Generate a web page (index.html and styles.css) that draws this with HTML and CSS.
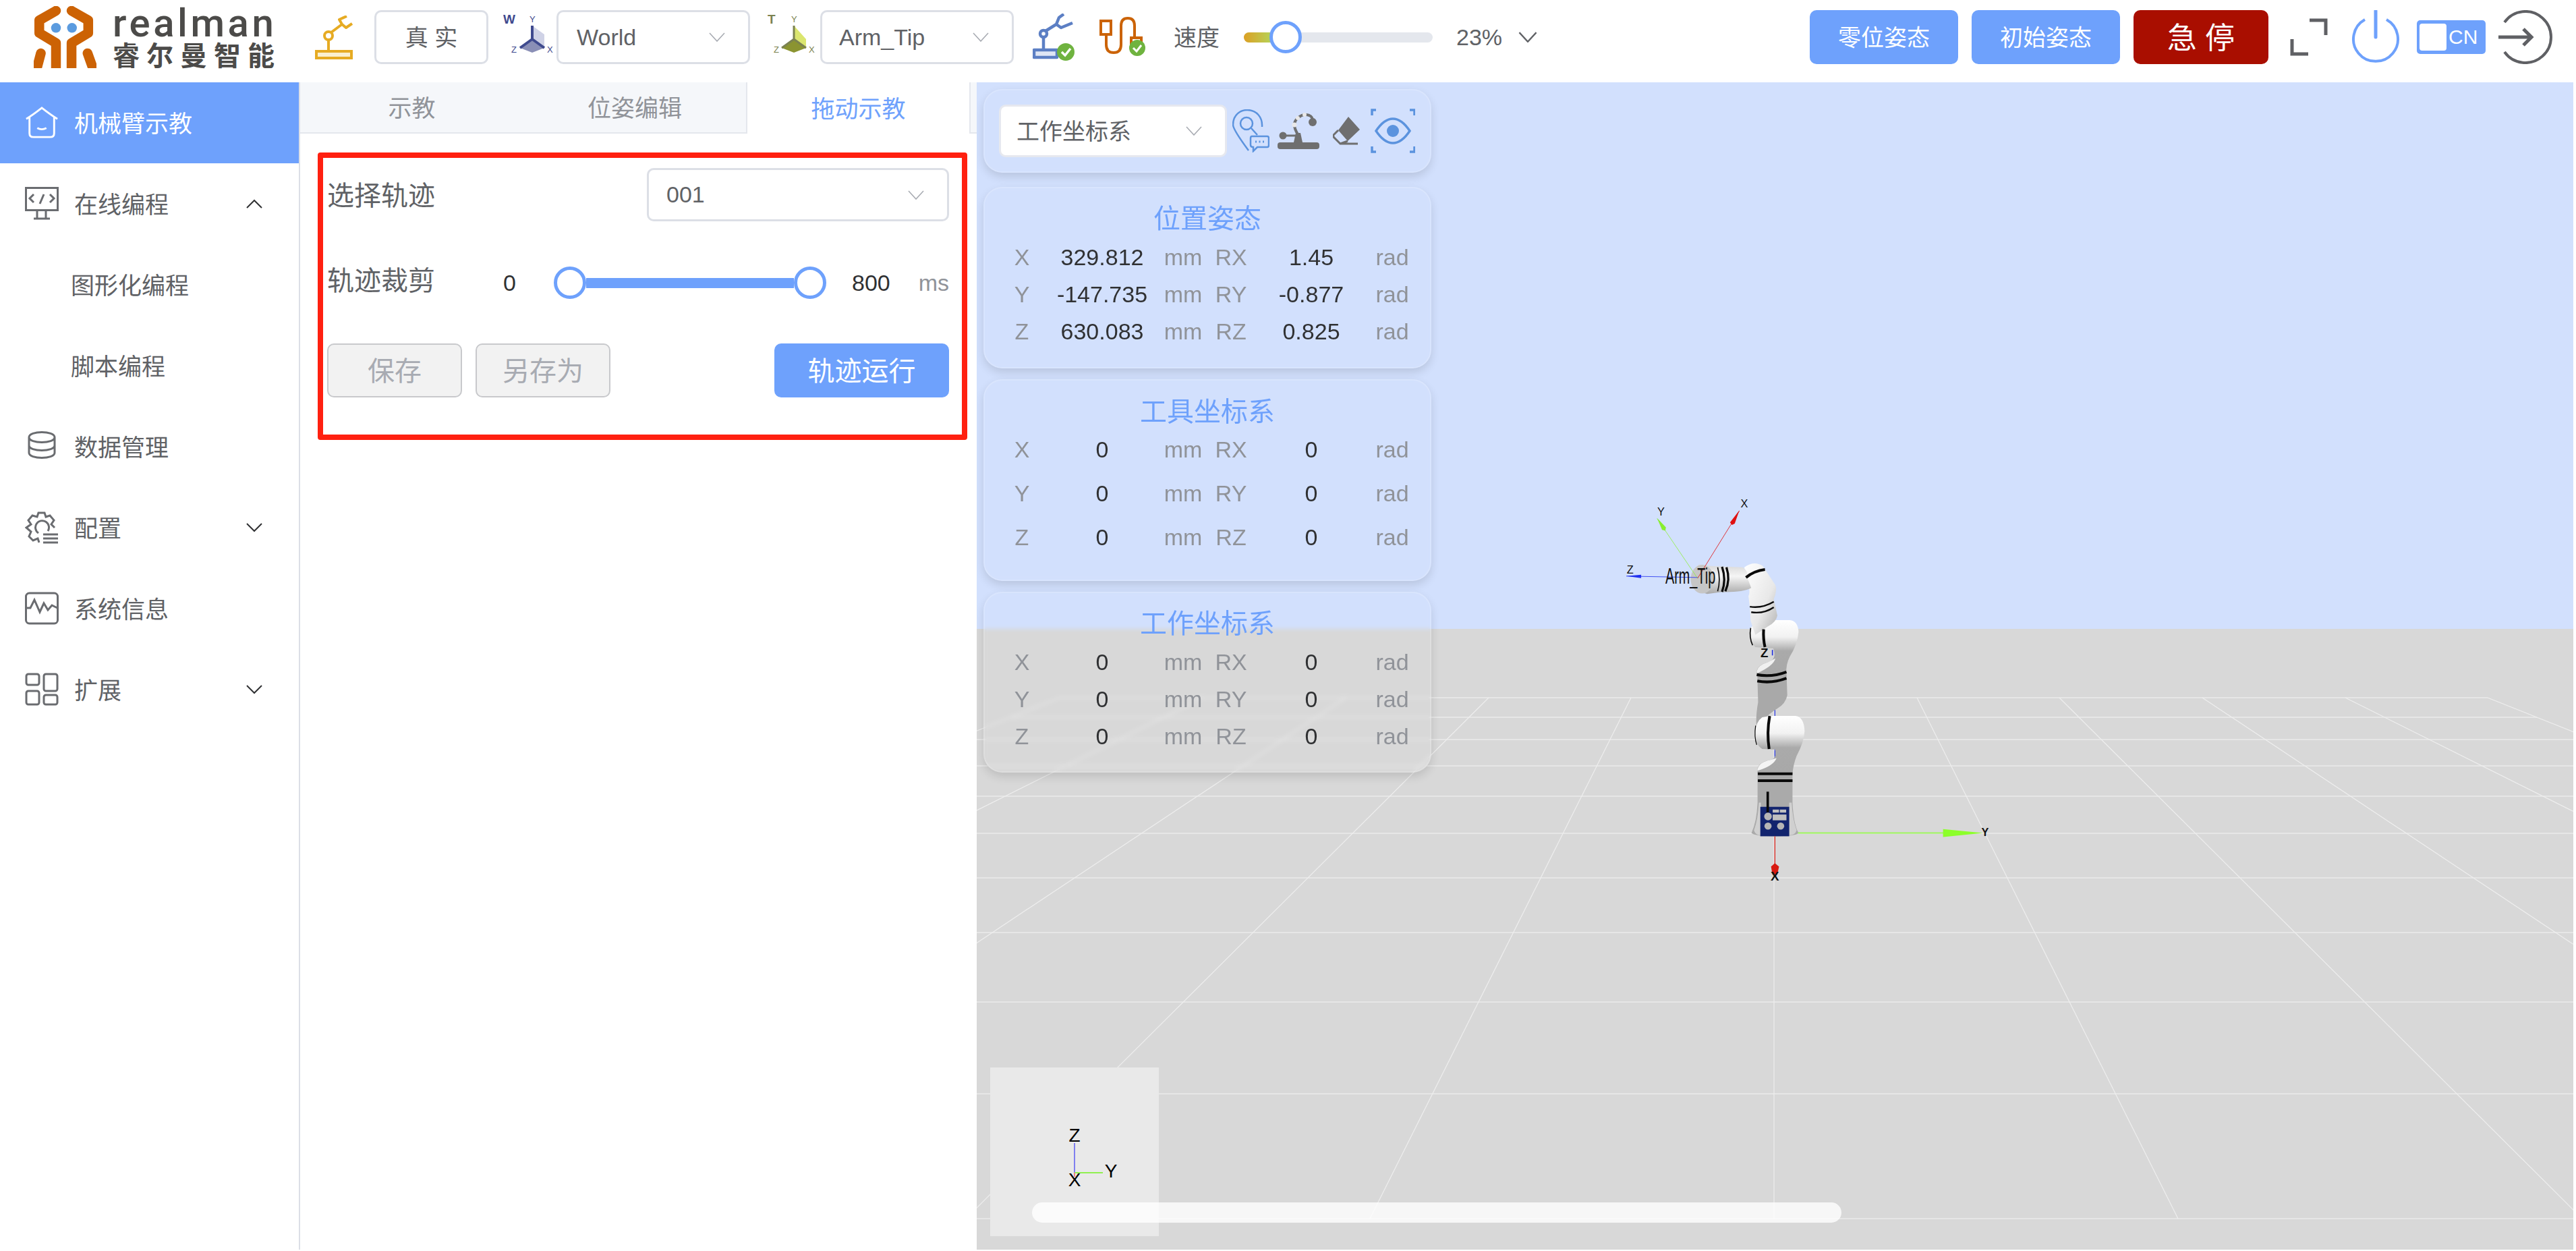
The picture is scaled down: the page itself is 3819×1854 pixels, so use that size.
FILE: index.html
```html
<!DOCTYPE html>
<html lang="zh-CN">
<head>
    <meta charset="UTF-8">
    <meta name="viewport" content="width=device-width, initial-scale=1.0">
    <title>realman 机械臂示教</title>
    <link rel="stylesheet" href="styles.css">
</head>
<body>
<div class="app">
    <header class="topbar">
        <div class="logo">
            <svg class="logo-mark" viewBox="150 25 282 277">
                <g fill="none" stroke="#cc6204" stroke-width="44" stroke-linecap="round" stroke-linejoin="round">
                    <path d="M250 45 L175 88 V145 L250 190 V300"/>
                    <path d="M320 45 L395 88 V145 L320 190 V300"/>
                    <path d="M182 236 L165 300"/>
                    <path d="M392 236 L415 300"/>
                </g>
                <circle cx="250" cy="122" r="22" fill="#5b9bdf"/>
                <circle cx="322" cy="122" r="22" fill="#5b9bdf"/>
            </svg>
            <div class="logo-text">
                <div class="logo-en">realman</div>
                <div class="logo-cn">睿尔曼智能</div>
            </div>
        </div>

        <svg class="icon-arm" viewBox="0 0 56 65">
            <g fill="none" stroke="#e6ab23" stroke-width="4">
                <rect x="2" y="53" width="52" height="10" fill="#faf0cf"/>
                <path d="M20 51 V37"/>
                <circle cx="20" cy="30" r="6"/>
                <path d="M24 25 L40 13 L36 6 L47 1 M40 13 L46 18 L55 12" stroke-linejoin="round"/>
            </g>
        </svg>
        <button class="mode-btn">真 实</button>

        <svg class="icon-frame" viewBox="0 -4 74 70">
            <path d="M43 18 L61 31 V51 L43 38 Z" fill="#cfd2e6"/>
            <path d="M43 38 L25 51 L43 58 L61 51 Z" fill="#8a8fb6"/>
            <path d="M43 38 V18 M43 38 L25 51 M43 38 L61 51" stroke="#3f4a8e" stroke-width="4" fill="none"/>
            <text x="0" y="15" class="frame-big" fill="#3f4a8e">W</text>
            <text x="39" y="13" class="frame-small" fill="#3f4a8e">Y</text>
            <text x="12" y="58" class="frame-small" fill="#3f4a8e">Z</text>
            <text x="65" y="58" class="frame-small" fill="#3f4a8e">X</text>
        </svg>
        <div class="select select-frame">
            <span>World</span>
            <svg class="chev" viewBox="0 0 24 14"><path d="M1 1 L12 13 L23 1"/></svg>
        </div>

        <svg class="icon-frame icon-frame-tool" viewBox="0 -4 72 70">
            <path d="M40 18 L58 38 V51 L40 38 Z" fill="#dbe66f"/>
            <path d="M40 38 L22 51 L40 58 L58 51 Z" fill="#8b9431"/>
            <path d="M40 38 V18 M40 38 L22 51 M40 38 L58 51" stroke="#7b8251" stroke-width="3" fill="none"/>
            <text x="1" y="15" class="frame-big" fill="#7b8251">T</text>
            <text x="36" y="13" class="frame-small" fill="#7b8251">Y</text>
            <text x="10" y="58" class="frame-small" fill="#7b8251">Z</text>
            <text x="62" y="58" class="frame-small" fill="#7b8251">X</text>
        </svg>
        <div class="select select-tool">
            <span>Arm_Tip</span>
            <svg class="chev" viewBox="0 0 24 14"><path d="M1 1 L12 13 L23 1"/></svg>
        </div>

        <svg class="icon-robot" viewBox="0 0 62 70">
            <g fill="none" stroke="#5c7fc4" stroke-width="4.5" stroke-linejoin="round">
                <rect x="2" y="54" width="34" height="11" fill="#dfe6f5"/>
                <path d="M16 52 V36"/>
                <circle cx="16" cy="30" r="5"/>
                <path d="M19 26 L35 16 L39 6 L46 1 M35 16 L42 21 L59 14"/>
            </g>
            <circle cx="49" cy="57" r="13" fill="#6fb33f"/>
            <path d="M43 57 L48 62 L56 52" fill="none" stroke="#fff" stroke-width="3.5"/>
        </svg>
        <svg class="icon-cable" viewBox="0 0 68 60">
            <g fill="none" stroke="#cb6306" stroke-width="4">
                <rect x="2" y="6" width="15" height="20"/>
                <path d="M10 26 V41 Q10 53 21 53 Q32 53 32 41 V13 Q32 2 42 2 Q52 2 52 13 V30"/>
                <rect x="47" y="31" width="15" height="8"/>
            </g>
            <circle cx="56" cy="46" r="12" fill="#6fb33f"/>
            <path d="M50 46 L55 51 L62 42" fill="none" stroke="#fff" stroke-width="3"/>
        </svg>

        <span class="speed-label">速度</span>
        <div class="speed-slider">
            <div class="speed-track"><div class="speed-fill"></div></div>
            <div class="speed-thumb"></div>
        </div>
        <span class="speed-value">23%</span>
        <svg class="chev chev-dark" viewBox="0 0 24 14"><path d="M1 1 L12 13 L23 1"/></svg>

        <div class="top-actions">
            <button class="action-btn">零位姿态</button>
            <button class="action-btn">初始姿态</button>
            <button class="stop-btn">急 停</button>
            <svg class="icon-full" viewBox="0 0 56 56">
                <path d="M29 3 H53 V25 M3 31 V53 H27" fill="none" stroke="#5f6064" stroke-width="5"/>
            </svg>
            <svg class="icon-power" viewBox="0 0 72 80">
                <path d="M20 14 A33 33 0 1 0 52 14" fill="none" stroke="#6ea1fc" stroke-width="4"/>
                <path d="M36 1 V40" fill="none" stroke="#6ea1fc" stroke-width="5" stroke-linecap="round"/>
            </svg>
            <div class="lang-toggle"><span class="lang-knob"></span><span>CN</span></div>
            <svg class="icon-exit" viewBox="0 0 82 80">
                <path d="M9 18 A38 38 0 1 1 9 62" fill="none" stroke="#5f6064" stroke-width="4"/>
                <path d="M0 40 H48 M37 28 L49 40 L37 52" fill="none" stroke="#5f6064" stroke-width="5"/>
            </svg>
        </div>
    </header>

    <div class="workspace">
        <nav class="sidebar">
            <a class="menu-item active">
                <svg class="menu-icon" viewBox="0 0 52 52">
                    <path d="M2 20 Q12 14 26 3 Q40 14 50 20 M7 18 V42 Q7 48 13 48 H39 Q45 48 45 42 V18 M19 34 Q26 38 33 34"/>
                </svg>
                <span>机械臂示教</span>
            </a>
            <a class="menu-item">
                <svg class="menu-icon" viewBox="0 0 50 50">
                    <rect x="1.5" y="1.5" width="47" height="33"/>
                    <path d="M13 11 L7 17 L13 23 M22 25 L28 11 M37 11 L43 17 L37 23 M18 35 V46 M31 35 V46 M13 47 H37"/>
                </svg>
                <span>在线编程</span>
                <svg class="menu-chev" viewBox="0 0 24 14"><path d="M1 13 L12 2 L23 13"/></svg>
            </a>
            <a class="menu-item sub"><span>图形化编程</span></a>
            <a class="menu-item sub"><span>脚本编程</span></a>
            <a class="menu-item">
                <svg class="menu-icon" viewBox="-4 0 50 50">
                    <path d="M2 11 C2 1 40 1 40 11 V34 C40 44 2 44 2 34 Z M2 11 C2 21 40 21 40 11 M2 23 C2 33 40 33 40 23"/>
                </svg>
                <span>数据管理</span>
            </a>
            <a class="menu-item">
                <svg class="menu-icon" viewBox="0 0 50 50">
                    <path d="M44 25 L39 20 L43 14 L37 7 L31 9 L29 3 H20 L18 9 L11 7 L5 14 L9 20 L2 25 L9 31 L6 38 L12 44 L19 41 L21 47 M34 30 A10 10 0 1 0 20 33 M27 35 H49 M27 41 H49 M27 47 H49"/>
                </svg>
                <span>配置</span>
                <svg class="menu-chev" viewBox="0 0 24 14"><path d="M1 1 L12 12 L23 1"/></svg>
            </a>
            <a class="menu-item">
                <svg class="menu-icon" viewBox="0 0 50 50">
                    <rect x="1.5" y="2" width="47" height="45" rx="5"/>
                    <path d="M2 24 H8 L14 12 L22 30 L28 17 L34 27 L40 20 L48 24"/>
                </svg>
                <span>系统信息</span>
            </a>
            <a class="menu-item">
                <svg class="menu-icon" viewBox="0 0 50 50">
                    <rect x="2" y="2" width="19" height="16" rx="3"/>
                    <rect x="2" y="27" width="19" height="20" rx="3"/>
                    <rect x="28" y="2" width="20" height="25" rx="3"/>
                    <rect x="28" y="33" width="20" height="14" rx="3"/>
                </svg>
                <span>扩展</span>
                <svg class="menu-chev" viewBox="0 0 24 14"><path d="M1 1 L12 12 L23 1"/></svg>
            </a>
        </nav>

        <section class="teach-panel">
            <div class="tabs">
                <div class="tab">示教</div>
                <div class="tab tab-edge">位姿编辑</div>
                <div class="tab tab-active">拖动示教</div>
                <div class="tab-rest"></div>
            </div>

            <div class="drag-box">
                <div class="drag-row">
                    <span class="drag-label">选择轨迹</span>
                    <div class="select select-track">
                        <span>001</span>
                        <svg class="chev" viewBox="0 0 24 14"><path d="M1 1 L12 13 L23 1"/></svg>
                    </div>
                </div>
                <div class="drag-row drag-row-slider">
                    <span class="drag-label drag-label-up">轨迹裁剪</span>
                    <span class="clip-min">0</span>
                    <div class="clip-slider">
                        <span class="clip-thumb"></span>
                        <span class="clip-fill"></span>
                        <span class="clip-thumb"></span>
                    </div>
                    <span class="clip-max">800</span>
                    <span class="clip-unit">ms</span>
                </div>
                <div class="drag-row drag-row-btns">
                    <button class="ghost-btn">保存</button>
                    <button class="ghost-btn">另存为</button>
                    <button class="run-btn">轨迹运行</button>
                </div>
            </div>
        </section>

        <section class="scene">
            <svg class="scene-canvas" viewBox="1448 122 2367 1730">
                <rect x="1448" y="122" width="2367" height="810" fill="#d2e0fd"/>
                <rect x="1448" y="932" width="2367" height="920" fill="#d8d8d8"/>

                <g stroke="#e6e6e6" stroke-width="2">
                    <line x1="1571" y1="1034" x2="3688" y2="1034"/>
                    <line x1="1499" y1="1063" x2="3761" y2="1063"/>
                    <line x1="1416" y1="1096" x2="3844" y2="1096"/>
                    <line x1="1318" y1="1135" x2="3942" y2="1135"/>
                    <line x1="1205" y1="1180" x2="4055" y2="1180"/>
                    <line x1="1067" y1="1235" x2="4193" y2="1235"/>
                    <line x1="902" y1="1301" x2="4358" y2="1301"/>
                    <line x1="699" y1="1382" x2="4561" y2="1382"/>
                    <line x1="440" y1="1485" x2="4820" y2="1485"/>
                    <line x1="99" y1="1621" x2="5161" y2="1621"/>
                    <line x1="-365" y1="1806" x2="5625" y2="1806"/>
                </g>
                <g stroke="#eeeeee" stroke-width="1.2">
                    <line x1="2630" y1="1034" x2="2630" y2="1806"/>
                    <line x1="2418" y1="1034" x2="2031" y2="1806"/>
                    <line x1="2842" y1="1034" x2="3229" y2="1806"/>
                    <line x1="2207" y1="1034" x2="1432" y2="1806"/>
                    <line x1="3053" y1="1034" x2="3828" y2="1806"/>
                    <line x1="1995" y1="1034" x2="833" y2="1806"/>
                    <line x1="3265" y1="1034" x2="4427" y2="1806"/>
                    <line x1="1783" y1="1034" x2="234" y2="1806"/>
                    <line x1="3477" y1="1034" x2="5026" y2="1806"/>
                    <line x1="1571" y1="1034" x2="-365" y2="1806"/>
                    <line x1="3688" y1="1034" x2="5625" y2="1806"/>
                </g>

                <g transform="translate(2380 700) scale(0.408)">
                    <defs>
                        <linearGradient id="bodyTop" x1="0" y1="0" x2="0" y2="1">
                            <stop offset="0" stop-color="#ffffff"/>
                            <stop offset="0.3" stop-color="#f2f2f2"/>
                            <stop offset="0.55" stop-color="#aaaaaa"/>
                            <stop offset="1" stop-color="#a8a8a8"/>
                        </linearGradient>
                        <linearGradient id="bodyWrist" x1="0" y1="0" x2="0" y2="1">
                            <stop offset="0" stop-color="#d8d8d8"/>
                            <stop offset="0.4" stop-color="#f5f5f5"/>
                            <stop offset="1" stop-color="#a8a8a8"/>
                        </linearGradient>
                        <linearGradient id="bodyFore" x1="0" y1="0" x2="1" y2="1">
                            <stop offset="0" stop-color="#ffffff"/>
                            <stop offset="0.6" stop-color="#e8e8e8"/>
                            <stop offset="1" stop-color="#b0b0b0"/>
                        </linearGradient>
                    </defs>

                    <line x1="616" y1="860" x2="616" y2="1040" stroke="#2030e0" stroke-width="3"/>
                    <line x1="607" y1="645" x2="607" y2="665" stroke="#2030e0" stroke-width="4"/>

                    <!-- base -->
                    <path d="M553 1090 H680 V1200 Q684 1280 702 1310 Q690 1322 616 1322 Q545 1322 531 1310 Q550 1270 553 1200 Z" fill="#aaaaaa"/>
                    <path d="M540 1300 Q555 1260 558 1200 L565 1200 V1318 Q545 1318 540 1300 Z M695 1300 Q680 1260 677 1200 L668 1200 V1318 Q690 1318 695 1300 Z" fill="#d0d0d0"/>
                    <!-- lower arm -->
                    <path d="M552 730 L658 722 L661 810 Q655 840 625 858 Q590 880 575 900 L552 950 Q543 900 555 835 Z" fill="#a9a9a9"/>
                    <!-- shoulder -->
                    <path d="M600 885 H690 Q722 888 724 940 Q722 980 695 1030 Q683 1060 680 1095 L553 1095 V1075 Q560 1052 600 1045 Q625 1038 616 1007 L570 1005 Q545 990 544 945 Q548 905 570 890 Z" fill="url(#bodyTop)"/>
                    <path d="M553 1078 Q560 1052 600 1045 L622 1038 Q612 1066 553 1084 Z" fill="#f4f4f4"/>
                    <!-- elbow -->
                    <path d="M620 537 H670 Q700 540 702 580 Q698 625 670 670 Q655 700 658 730 L552 740 L550 720 Q555 700 590 690 Q625 680 610 640 L545 635 Q525 620 525 570 Q530 550 620 537 Z" fill="url(#bodyTop)"/>
                    <path d="M550 722 Q555 700 590 690 L618 676 Q612 702 552 730 Z" fill="#f0f0f0"/>
                    <!-- forearm -->
                    <path d="M505 345 Q540 320 572 340 L618 410 Q625 430 612 460 L625 520 Q620 545 590 560 L545 590 L528 540 L525 490 L520 450 Q530 430 510 380 Z" fill="url(#bodyFore)"/>
                    <!-- wrist -->
                    <path d="M380 340 L500 345 Q520 360 515 380 L530 420 Q500 437 420 435 L370 442 Q320 430 312 390 Q315 350 340 335 Z" fill="url(#bodyWrist)"/>
                    <ellipse cx="352" cy="388" rx="42" ry="52" fill="#c6c6c6"/>

                    <!-- black bands -->
                    <g fill="none" stroke="#0a0a0a" stroke-width="10">
                        <path d="M511 382 Q540 358 580 353"/>
                        <path d="M525 488 Q570 495 612 470" stroke-width="6"/>
                        <path d="M530 508 Q575 515 612 490" stroke-width="6"/>
                        <path d="M575 570 Q573 605 580 635"/>
                        <path d="M528 565 Q522 600 535 628" stroke-width="4"/>
                        <path d="M550 735 Q605 745 658 725"/>
                        <path d="M552 758 Q605 768 658 748"/>
                        <path d="M597 885 Q586 945 595 1005"/>
                        <path d="M546 920 Q540 960 550 990" stroke-width="3"/>
                        <path d="M554 1095 H680"/>
                        <path d="M554 1120 H680"/>
                        <path d="M408 345 Q420 390 408 432" stroke-width="4"/>
                        <path d="M424 343 Q440 390 424 434" stroke-width="8"/>
                        <path d="M440 345 Q455 390 436 432" stroke-width="8"/>
                    </g>

                    <!-- control plate -->
                    <rect x="563" y="1215" width="105" height="107" fill="#12246e"/>
                    <circle cx="591" cy="1250" r="14" fill="#b5b5b5"/>
                    <circle cx="591" cy="1285" r="13" fill="#b5b5b5"/>
                    <circle cx="637" cy="1285" r="13" fill="#b5b5b5"/>
                    <rect x="608" y="1225" width="23" height="11" fill="#c0c0c0"/>
                    <rect x="634" y="1225" width="23" height="11" fill="#c0c0c0"/>
                    <rect x="608" y="1243" width="50" height="21" fill="#c0c0c0"/>
                    <path d="M590 1160 V1235" stroke="#0a0a0a" stroke-width="9"/>

                    <!-- base axes -->
                    <line x1="700" y1="1310" x2="1232" y2="1310" stroke="#9cf55a" stroke-width="5"/>
                    <path d="M1227 1296 L1372 1310 L1227 1325 Z" fill="#8cff2a"/>
                    <line x1="616" y1="1322" x2="616" y2="1425" stroke="#d81a10" stroke-width="3"/>
                    <path d="M602 1432 L616 1420 L631 1432 L625 1460 H607 Z" fill="#d81a10"/>
                    <text x="1380" y="1322" class="axis-label axis-label-bold">Y</text>
                    <text x="616" y="1484" class="axis-label axis-label-big">X</text>
                    <text x="578" y="672" class="axis-label axis-label-big">Z</text>

                    <!-- tool axes -->
                    <line x1="335" y1="385" x2="487" y2="140" stroke="#e01010" stroke-width="2"/>
                    <path d="M487 138 L470 186 L460 191 L453 182 Z" fill="#e01010"/>
                    <line x1="335" y1="385" x2="188" y2="168" stroke="#90f040" stroke-width="2"/>
                    <path d="M188 166 L220 200 L218 212 L206 209 Z" fill="#88ee30"/>
                    <line x1="335" y1="382" x2="76" y2="377" stroke="#2030f0" stroke-width="2"/>
                    <path d="M76 377 L130 372 V384 Z" fill="#2030f0"/>
                    <text x="505" y="128" class="axis-label">X</text>
                    <text x="202" y="158" class="axis-label">Y</text>
                    <text x="90" y="368" class="axis-label">Z</text>
                    <text x="218" y="405" class="arm-tip" textLength="182" lengthAdjust="spacingAndGlyphs">Arm_Tip</text>
                </g>
            </svg>

            <div class="float-cards">
                <div class="card card-tools">
                    <div class="select select-coord">
                        <span>工作坐标系</span>
                        <svg class="chev" viewBox="0 0 24 14"><path d="M1 1 L12 13 L23 1"/></svg>
                    </div>
                    <svg class="tool-icon tool-pin" viewBox="0 0 55 64">
                        <g fill="none" stroke="#5b93de" stroke-width="2.5">
                            <path d="M24 61 Q1 30 1 23 C1 8 12 1 22 1 C36 1 45 12 44 26"/>
                            <circle cx="21" cy="21" r="9"/>
                            <path d="M28 28 L37 38"/>
                            <path d="M29 40 H52 Q54 40 54 43 V53 Q54 56 52 56 H37 L31 62 V56 Q27 56 27 53 V43 Q27 40 29 40 Z"/>
                        </g>
                        <path d="M34 48 H36 M39.5 48 H41.5 M45 48 H47" stroke="#5b93de" stroke-width="3"/>
                    </svg>
                    <svg class="tool-icon tool-robot" viewBox="0 0 62 54">
                        <rect x="0" y="44" width="62" height="10" rx="4" fill="#6f6f6f"/>
                        <path d="M24 44 L27 30 H34 L37 44 Z" fill="#6f6f6f"/>
                        <path d="M30 32 Q20 16 30 8 Q38 1 47 4 Q52 6 52 12" fill="none" stroke="#6f6f6f" stroke-width="4"/>
                        <path d="M8 34 H28" stroke="#6f6f6f" stroke-width="3"/>
                        <circle cx="8" cy="34" r="5.5" fill="#6f6f6f"/>
                        <circle cx="52" cy="14" r="6" fill="#6f6f6f"/>
                        <circle cx="25" cy="18" r="3.5" fill="#e8e8e8"/>
                        <circle cx="30" cy="8" r="3" fill="#e8e8e8"/>
                        <circle cx="40" cy="3" r="3" fill="#e8e8e8"/>
                    </svg>
                    <svg class="tool-icon tool-eraser" viewBox="0 0 40 42">
                        <path d="M23 0 L40 19 L22 36 L8 20 Z" fill="#6f6f6f"/>
                        <path d="M8 20 L1 27 Q0 29 2 31 L11 40 H37 M11 40 L22 36" fill="none" stroke="#6f6f6f" stroke-width="3"/>
                    </svg>
                    <svg class="tool-icon tool-eye" viewBox="0 0 66 66">
                        <g fill="none" stroke="#5b93de" stroke-width="3.5">
                            <path d="M8 2 H2 V10 M58 2 H65 V10 M2 56 V64 H8 M65 56 V64 H58"/>
                            <path d="M8 33 Q20 15 33 15 Q46 15 58 33 Q46 51 33 51 Q20 51 8 33 Z"/>
                        </g>
                        <circle cx="33" cy="33" r="9" fill="#5b93de"/>
                    </svg>
                </div>

                <div class="card card-pose">
                    <div class="card-title">位置姿态</div>
                    <div class="pose-row"><span class="pose-key">X</span><span class="pose-val">329.812</span><span class="pose-key">mm</span><span class="pose-key">RX</span><span class="pose-val">1.45</span><span class="pose-key">rad</span></div>
                    <div class="pose-row"><span class="pose-key">Y</span><span class="pose-val">-147.735</span><span class="pose-key">mm</span><span class="pose-key">RY</span><span class="pose-val">-0.877</span><span class="pose-key">rad</span></div>
                    <div class="pose-row"><span class="pose-key">Z</span><span class="pose-val">630.083</span><span class="pose-key">mm</span><span class="pose-key">RZ</span><span class="pose-val">0.825</span><span class="pose-key">rad</span></div>
                </div>

                <div class="card card-tool">
                    <div class="card-title">工具坐标系</div>
                    <div class="pose-row"><span class="pose-key">X</span><span class="pose-val">0</span><span class="pose-key">mm</span><span class="pose-key">RX</span><span class="pose-val">0</span><span class="pose-key">rad</span></div>
                    <div class="pose-row"><span class="pose-key">Y</span><span class="pose-val">0</span><span class="pose-key">mm</span><span class="pose-key">RY</span><span class="pose-val">0</span><span class="pose-key">rad</span></div>
                    <div class="pose-row"><span class="pose-key">Z</span><span class="pose-val">0</span><span class="pose-key">mm</span><span class="pose-key">RZ</span><span class="pose-val">0</span><span class="pose-key">rad</span></div>
                </div>

                <div class="card card-work">
                    <div class="card-title">工作坐标系</div>
                    <div class="pose-row"><span class="pose-key">X</span><span class="pose-val">0</span><span class="pose-key">mm</span><span class="pose-key">RX</span><span class="pose-val">0</span><span class="pose-key">rad</span></div>
                    <div class="pose-row"><span class="pose-key">Y</span><span class="pose-val">0</span><span class="pose-key">mm</span><span class="pose-key">RY</span><span class="pose-val">0</span><span class="pose-key">rad</span></div>
                    <div class="pose-row"><span class="pose-key">Z</span><span class="pose-val">0</span><span class="pose-key">mm</span><span class="pose-key">RZ</span><span class="pose-val">0</span><span class="pose-key">rad</span></div>
                </div>
            </div>

            <div class="gizmo">
                <svg class="gizmo-axes" viewBox="0 0 250 250">
                    <line x1="125" y1="112" x2="125" y2="156" stroke="#8080f0" stroke-width="2"/>
                    <line x1="125" y1="156" x2="167" y2="156" stroke="#90f050" stroke-width="2"/>
                    <line x1="125" y1="156" x2="125" y2="162" stroke="#f08080" stroke-width="2"/>
                    <text x="125" y="110" class="gizmo-label">Z</text>
                    <text x="179" y="163" class="gizmo-label">Y</text>
                    <text x="125" y="176" class="gizmo-label">X</text>
                </svg>
            </div>
            <div class="scene-scroll"></div>
        </section>
    </div>
</div>
</body>
</html>
```

FILE: styles.css
```css
:root {
    --primary-color: #6ea1fc;
    --text-color: #606266;
    --muted-color: #909399;
    --dark-text: #303133;
    --line-color: #dcdfe6;
    --sans: "Liberation Sans", "Noto Sans CJK SC", sans-serif;
}

* {
    box-sizing: border-box;
}

html {
    overflow: hidden;
}

body {
    margin: 0;
    background-color: #ffffff;
    font-family: var(--sans);
    font-size: 34px;
    color: var(--text-color);
}

button {
    font-family: var(--sans);
    cursor: pointer;
    padding: 0 0 4px;
}

.app {
    width: 3815px;
    height: 1852px;
    display: flex;
    flex-direction: column;
    overflow: hidden;
}

/* top bar */
.topbar {
    flex: 0 0 122px;
    display: flex;
    align-items: center;
    padding: 0 0 12px 50px;
}

.logo {
    display: flex;
    align-items: center;
    gap: 24px;
    width: 360px;
    height: 92px;
}

.logo-mark {
    width: 93px;
    height: 92px;
    flex: none;
}

.logo-text {
    color: #4c4b49;
    white-space: nowrap;
}

.logo-en {
    font-family: Roboto, sans-serif;
    font-size: 58px;
    font-weight: 500;
    letter-spacing: 4.6px;
    line-height: 50px;
}

.logo-cn {
    font-family: "Noto Sans CJK SC", sans-serif;
    font-size: 40px;
    font-weight: 700;
    letter-spacing: 10px;
    line-height: 42px;
}

.icon-arm {
    width: 56px;
    height: 65px;
    margin-left: 57px;
}

.mode-btn {
    width: 169px;
    height: 80px;
    margin-left: 32px;
    background: #ffffff;
    border: 3px solid var(--line-color);
    border-radius: 10px;
    font-size: 34px;
    color: var(--text-color);
}

.icon-frame {
    width: 74px;
    height: 70px;
    margin-left: 22px;
    margin-bottom: 8px;
}

.icon-frame-tool {
    width: 72px;
    margin-left: 25px;
}

.frame-big {
    font-size: 19px;
    font-weight: 700;
}

.frame-small {
    font-size: 13px;
}

.select {
    display: flex;
    align-items: center;
    justify-content: space-between;
    background: #ffffff;
    border: 3px solid var(--line-color);
    border-radius: 10px;
    color: var(--text-color);
    font-size: 34px;
}

.select-frame,
.select-tool {
    width: 287px;
    height: 80px;
    padding: 0 34px 0 27px;
}

.select-frame {
    margin-left: 5px;
}

.select-tool {
    margin-left: 7px;
    padding-left: 25px;
}

.select-track {
    width: 448px;
    height: 79px;
    padding: 0 34px 0 26px;
}

.select-coord {
    width: 338px;
    height: 78px;
    padding: 0 34px 0 23px;
    border-color: #e6e8ef;
}

.select-coord span {
    margin-bottom: 4px;
}

.chev {
    width: 24px;
    height: 14px;
    fill: none;
    stroke: #a8abb2;
    stroke-width: 1.6;
}

.chev-dark {
    width: 28px;
    height: 16px;
    margin-left: 24px;
    stroke: var(--text-color);
    stroke-width: 2;
}

.icon-robot {
    width: 62px;
    height: 70px;
    margin-left: 28px;
}

.icon-cable {
    width: 68px;
    height: 60px;
    margin-left: 37px;
}

.speed-label {
    margin-left: 42px;
    margin-bottom: 4px;
    color: var(--text-color);
}

.speed-slider {
    position: relative;
    width: 280px;
    height: 48px;
    margin-left: 36px;
    display: flex;
    align-items: center;
}

.speed-track {
    width: 100%;
    height: 15px;
    background: #e4e7ed;
    border-radius: 8px;
    overflow: hidden;
}

.speed-fill {
    width: 62px;
    height: 100%;
    background: linear-gradient(90deg, #dca024, #a3ec72);
}

.speed-thumb {
    position: absolute;
    left: 38px;
    top: 0;
    width: 48px;
    height: 48px;
    background: #ffffff;
    border: 5px solid var(--primary-color);
    border-radius: 50%;
}

.speed-value {
    margin-left: 35px;
}

.top-actions {
    margin-left: auto;
    display: flex;
    align-items: center;
}

.action-btn,
.stop-btn {
    height: 80px;
    border: none;
    border-radius: 10px;
    color: #ffffff;
}

.action-btn {
    width: 220px;
    margin-right: 20px;
    background: var(--primary-color);
    font-size: 34px;
}

.stop-btn {
    width: 200px;
    background: #a90e00;
    font-size: 44px;
}

.icon-full {
    width: 56px;
    height: 56px;
    margin-left: 32px;
}

.icon-power {
    width: 72px;
    height: 80px;
    margin-left: 35px;
}

.lang-toggle {
    width: 102px;
    height: 50px;
    margin-left: 25px;
    padding: 5px 0 5px 4px;
    display: flex;
    align-items: center;
    gap: 3px;
    background: var(--primary-color);
    border-radius: 5px;
    color: #ffffff;
    font-size: 30px;
}

.lang-knob {
    width: 40px;
    height: 40px;
    background: #ffffff;
    border-radius: 4px;
}

.icon-exit {
    width: 82px;
    height: 80px;
    margin-left: 19px;
    margin-right: 29px;
}

/* body */
.workspace {
    flex: 1;
    display: flex;
    min-height: 0;
}

/* sidebar */
.sidebar {
    flex: 0 0 445px;
    border-right: 2px solid var(--line-color);
}

.menu-item {
    height: 120px;
    display: flex;
    align-items: center;
    padding: 0 54px 0 37px;
    font-size: 35px;
    color: var(--text-color);
}

.menu-item span {
    margin-left: 23px;
    margin-bottom: 4px;
}

.menu-item.active {
    background-color: var(--primary-color);
    color: #ffffff;
}

.menu-item.sub {
    padding-left: 82px;
}

.menu-icon {
    width: 50px;
    height: 50px;
    flex: none;
    fill: none;
    stroke: #6a6c70;
    stroke-width: 3;
}

.active .menu-icon {
    stroke: #ffffff;
}

.menu-chev {
    width: 24px;
    height: 14px;
    margin-left: auto;
    fill: none;
    stroke: var(--dark-text);
    stroke-width: 2;
}

/* teach panel */
.teach-panel {
    flex: 0 0 1003px;
}

.tabs {
    height: 76px;
    display: flex;
}

.tab {
    width: 331px;
    display: flex;
    align-items: center;
    justify-content: center;
    padding-bottom: 4px;
    background-color: #f5f7fa;
    border-bottom: 2px solid #e4e7ed;
    font-size: 35px;
    color: var(--muted-color);
}

.tab-edge {
    width: 332px;
    border-right: 2px solid #e4e7ed;
}

.tab-active {
    background-color: #ffffff;
    border-bottom: none;
    border-right: 2px solid #e4e7ed;
    color: var(--primary-color);
}

.tab-rest {
    flex: 1;
    background-color: #f5f7fa;
    border-bottom: 2px solid #e4e7ed;
}

.drag-box {
    width: 963px;
    height: 426px;
    margin: 28px 0 0 26px;
    padding: 15px 19px 0 6px;
    border: 8px solid #ff2010;
    border-radius: 4px;
}

.drag-row {
    display: flex;
    align-items: center;
    justify-content: space-between;
}

.drag-label {
    padding-bottom: 4px;
    font-size: 40px;
    color: var(--text-color);
}

.drag-label-up {
    padding-bottom: 12px;
}

.drag-row-slider {
    margin-top: 67px;
    height: 48px;
    justify-content: flex-start;
}

.clip-min {
    width: 18px;
    margin-left: 101px;
    color: var(--dark-text);
}

.clip-slider {
    width: 404px;
    margin-left: 57px;
    display: flex;
    align-items: center;
}

.clip-thumb {
    flex: 0 0 48px;
    height: 48px;
    background: #ffffff;
    border: 5px solid var(--primary-color);
    border-radius: 50%;
}

.clip-fill {
    flex: 1;
    height: 15px;
    background: var(--primary-color);
}

.clip-max {
    margin-left: 38px;
    color: var(--dark-text);
}

.clip-unit {
    margin-left: auto;
    color: var(--muted-color);
}

.drag-row-btns {
    margin-top: 66px;
    justify-content: flex-start;
    gap: 20px;
}

.ghost-btn,
.run-btn {
    height: 80px;
    border-radius: 10px;
    font-size: 40px;
}

.ghost-btn {
    width: 200px;
    background: #f2f2f2;
    border: 2px solid #c8c9cc;
    color: #a8abb2;
}

.run-btn {
    width: 259px;
    margin-left: auto;
    background: var(--primary-color);
    border: none;
    color: #ffffff;
}

/* 3d scene */
.scene {
    position: relative;
    flex: 1;
    overflow: hidden;
}

.scene-canvas {
    display: block;
    width: 100%;
    height: 100%;
}

.axis-label {
    font-family: "Liberation Sans", sans-serif;
    font-size: 40px;
    text-anchor: middle;
    fill: #111111;
}

.axis-label-bold {
    font-weight: 700;
}

.axis-label-big {
    font-size: 46px;
    font-weight: 700;
}

.arm-tip {
    font-family: "Liberation Sans", sans-serif;
    font-size: 80px;
    fill: #111111;
}

.float-cards {
    position: absolute;
    left: 10px;
    top: 10px;
    width: 664px;
    display: flex;
    flex-direction: column;
}

.card {
    border: 2px solid rgba(255, 255, 255, 0.16);
    border-radius: 28px;
    box-shadow: 0 6px 14px rgba(0, 0, 0, 0.12);
    backdrop-filter: blur(3px);
    padding: 0 20px;
}

.card-tools {
    height: 124px;
    display: flex;
    align-items: center;
    padding-left: 21px;
}

.tool-pin {
    width: 55px;
    height: 64px;
    margin-left: 8px;
}

.tool-robot {
    width: 62px;
    height: 54px;
    margin-left: 12px;
}

.tool-eraser {
    width: 40px;
    height: 42px;
    margin-left: 20px;
}

.tool-eye {
    width: 66px;
    height: 66px;
    margin-left: 16px;
}

.card-pose {
    height: 269px;
    margin-top: 21px;
    padding-top: 19px;
}

.card-tool {
    height: 299px;
    margin-top: 16px;
    padding-top: 20px;
}

.card-work {
    height: 268px;
    margin-top: 16px;
    padding-top: 19px;
}

.card-title {
    height: 50px;
    margin-bottom: 6px;
    display: flex;
    align-items: center;
    justify-content: center;
    padding-bottom: 4px;
    font-size: 40px;
    color: var(--primary-color);
}

.card-tool .card-title {
    margin-bottom: 0;
}

.pose-row {
    height: 55px;
    display: grid;
    grid-template-columns: 70px 168px 72px 70px 168px 72px;
    align-items: center;
    justify-items: center;
    font-size: 34px;
}

.card-tool .pose-row {
    height: 65px;
}

.pose-key {
    color: var(--muted-color);
}

.pose-val {
    color: var(--dark-text);
}

.gizmo {
    position: absolute;
    left: 20px;
    top: 1460px;
    width: 250px;
    height: 250px;
    background-color: #e9e9e9;
}

.gizmo-axes {
    display: block;
    width: 100%;
    height: 100%;
}

.gizmo-label {
    font-family: "Liberation Sans", sans-serif;
    font-size: 28px;
    text-anchor: middle;
    fill: #000000;
}

.scene-scroll {
    position: absolute;
    left: 82px;
    top: 1660px;
    width: 1200px;
    height: 30px;
    background-color: rgba(255, 255, 255, 0.8);
    border-radius: 15px;
}
```
